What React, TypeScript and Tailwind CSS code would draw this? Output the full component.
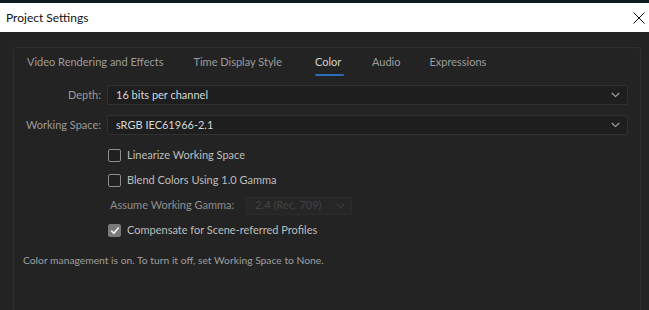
import React from "react";

const font = { fontFamily: 'Lato, "Noto Sans", sans-serif' };

function Chevron({ dim }: { dim?: boolean }) {
  return (
    <svg width="9" height="6" viewBox="0 0 9 6" className="shrink-0">
      <path d="M0.8 1 L4.5 4.6 L8.2 1" fill="none" stroke={dim ? "#3c3c3c" : "#a8a8a8"} strokeWidth="1.1" />
    </svg>
  );
}

function Select({ value }: { value: string }) {
  return (
    <div className="flex-1 h-[20px] flex items-center justify-between pl-[8px] pr-[7px] bg-[#1e1e1e] border border-[#303030] rounded-[2px] text-[#d6d6d6] text-[11px]">
      <span>{value}</span>
      <Chevron />
    </div>
  );
}

function Check({ label, checked }: { label: string; checked?: boolean }) {
  return (
    <div className="flex items-center gap-[6px] h-[25px]">
      <div
        className={
          "w-[13px] h-[13px] rounded-[2px] border flex items-center justify-center " +
          (checked ? "bg-[#7a7a7a] border-[#7a7a7a]" : "bg-[#202020] border-[#8c8c8c]")
        }
      >
        {checked && (
          <svg width="10" height="9" viewBox="0 0 10 9">
            <path d="M1.3 4.6 L3.9 7.2 L8.7 1.5" fill="none" stroke="#f0f0f0" strokeWidth="1.6" />
          </svg>
        )}
      </div>
      <span className="text-[#bdbdbd] text-[11px]">{label}</span>
    </div>
  );
}

const tabs = [
  { name: "Video Rendering and Effects", cls: "" },
  { name: "Time Display Style", cls: "ml-[30px]" },
  { name: "Color", cls: "ml-[33px]" },
  { name: "Audio", cls: "ml-[28px]" },
  { name: "Expressions", cls: "ml-[29px]" },
];

export default function App() {
  return (
    <div className="w-[649px] h-[310px] overflow-hidden flex flex-col bg-[#232323]" style={font}>
      {/* desktop strip */}
      <div className="h-[3px] bg-[#0f1a1d]" />

      {/* title bar */}
      <div className="h-[29px] bg-white flex items-center justify-between pl-[6px] pr-[3px]">
        <span className="text-[12px] text-[#111]">Project Settings</span>
        <svg width="12" height="12" viewBox="0 0 12 12" className="mr-[1px]">
          <path d="M0.5 0.5 L11.5 11.5 M11.5 0.5 L0.5 11.5" stroke="#111" strokeWidth="1" />
        </svg>
      </div>

      {/* body */}
      <div className="flex-1 pt-[15px] pl-[13px] pr-[8px]">
        <div className="h-full border-l border-t border-r border-[#2f2f2f] rounded-tl-[3px] rounded-tr-[3px] bg-[#232323]">
          {/* tabs */}
          <div className="flex items-start pl-[13px] pt-[6px] h-[30px] text-[11px]">
            {tabs.map((t) => (
              <div key={t.name} className={"flex flex-col items-start " + t.cls}>
                <span className={t.name === "Color" ? "text-[#d4d4d4]" : "text-[#9c9c9c]"}>{t.name}</span>
                {t.name === "Color" && <div className="mt-[3px] h-[2px] w-[29px] bg-[#2c6dbb] rounded-full" />}
              </div>
            ))}
          </div>

          {/* selects */}
          <div className="pl-[10px] pr-[12px] pt-[7px] flex flex-col gap-[10px]">
            <div className="flex items-center gap-[6px]">
              <span className="w-[77px] text-right text-[#9a9a9a] text-[11px]">Depth:</span>
              <Select value="16 bits per channel" />
            </div>
            <div className="flex items-center gap-[6px]">
              <span className="w-[77px] text-right text-[#9a9a9a] text-[11px] whitespace-nowrap">Working Space:</span>
              <Select value="sRGB IEC61966-2.1" />
            </div>
          </div>

          {/* options */}
          <div className="pl-[94px] pt-[8px] flex flex-col">
            <Check label="Linearize Working Space" />
            <Check label="Blend Colors Using 1.0 Gamma" />
            <div className="flex items-center h-[25px] gap-[12px] pl-[2px]">
              <span className="text-[#8f8f8f] text-[11px]">Assume Working Gamma:</span>
              <div className="w-[106px] h-[18px] flex items-center justify-between pl-[8px] pr-[6px] bg-[#262626] border border-[#2c2c2c] rounded-[2px]">
                <span className="text-[#444] text-[11px]">2.4 (Rec. 709)</span>
                <Chevron dim />
              </div>
            </div>
            <Check label="Compensate for Scene-referred Profiles" checked />
          </div>

          {/* footer note */}
          <div className="pl-[9px] pt-[10px] text-[#9f9f9f] text-[10.3px]">
            Color management is on. To turn it off, set Working Space to None.
          </div>
        </div>
      </div>
    </div>
  );
}
